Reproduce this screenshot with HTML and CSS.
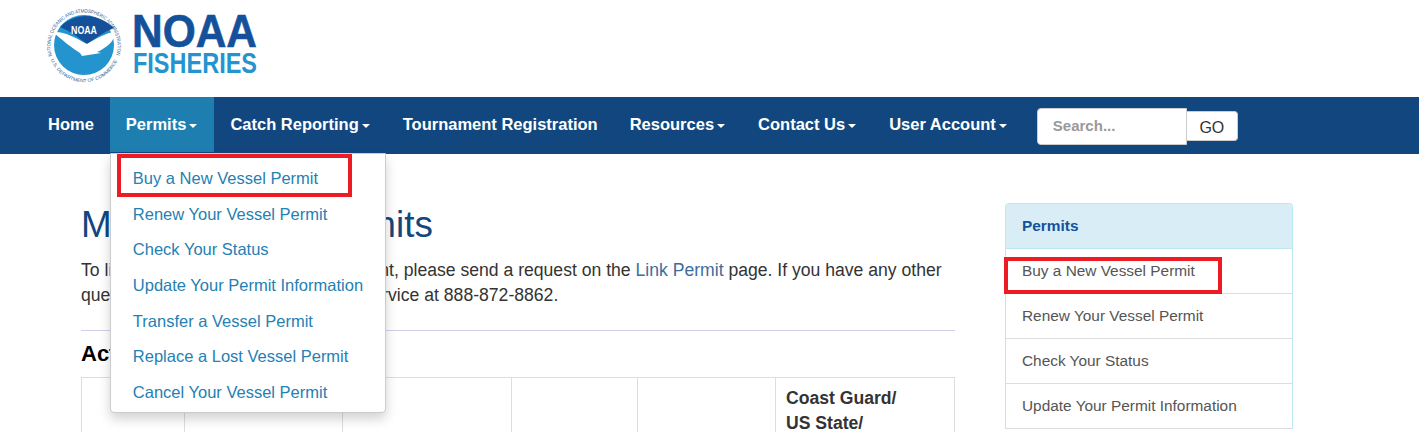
FILE: index.html
```html
<!DOCTYPE html>
<html lang="en">
<head>
<meta charset="utf-8">
<title>Permits</title>
<link rel="stylesheet" href="styles.css">
</head>
<body>
<header class="brand">
  <svg class="logo" width="240" height="97" viewBox="0 0 240 97" aria-label="NOAA Fisheries">
    <defs>
      <path id="ringTop" d="M22 56 A33.5 33.5 0 1 1 86 56"/>
      <path id="ringBot" d="M20 58 A36 36 0 0 0 88 58"/>
    </defs>
    <circle cx="54" cy="45" r="30" fill="#2494cf"/>
    <path d="M30 27 C37 20 46 16 56 16 C67 16 77 21 84 28 C74 32 66 38 57 44 C49 38 40 31 30 27Z" fill="#15519b"/>
    <path d="M23 32 C34 31 46 38 57 44 C67 38 76 33 87 31 C84 42 76 48 67 52 L71 53 L52 56 L50 53 C42 48 32 40 23 32Z" fill="#fff"/>
    <text x="41" y="34" class="logo-mini" textLength="26" lengthAdjust="spacingAndGlyphs">NOAA</text>
    <text class="logo-ring"><textPath href="#ringTop" textLength="124" lengthAdjust="spacingAndGlyphs">NATIONAL OCEANIC AND ATMOSPHERIC ADMINISTRATION</textPath></text>
    <text class="logo-ring small"><textPath href="#ringBot" startOffset="2" textLength="84" lengthAdjust="spacingAndGlyphs">U.S. DEPARTMENT OF COMMERCE</textPath></text>
    <text x="102" y="47" class="logo-noaa" textLength="125" lengthAdjust="spacingAndGlyphs">NOAA</text>
    <text x="103" y="73" class="logo-fish" textLength="124" lengthAdjust="spacingAndGlyphs">FISHERIES</text>
  </svg>
</header>

<nav class="navbar">
  <ul class="nav-list">
    <li class="nav-item"><a href="#">Home</a></li>
    <li class="nav-item active"><a href="#">Permits<span class="caret"></span></a>
      <ul class="dropdown">
        <li><a href="#">Buy a New Vessel Permit</a></li>
        <li><a href="#">Renew Your Vessel Permit</a></li>
        <li><a href="#">Check Your Status</a></li>
        <li><a href="#">Update Your Permit Information</a></li>
        <li><a href="#">Transfer a Vessel Permit</a></li>
        <li><a href="#">Replace a Lost Vessel Permit</a></li>
        <li><a href="#">Cancel Your Vessel Permit</a></li>
      </ul>
      <span class="red-box red-menu"></span>
    </li>
    <li class="nav-item"><a href="#">Catch Reporting<span class="caret"></span></a></li>
    <li class="nav-item"><a href="#">Tournament Registration</a></li>
    <li class="nav-item"><a href="#">Resources<span class="caret"></span></a></li>
    <li class="nav-item"><a href="#">Contact Us<span class="caret"></span></a></li>
    <li class="nav-item"><a href="#">User Account<span class="caret"></span></a></li>
  </ul>
  <form class="search">
    <input class="search-input" type="text" placeholder="Search...">
    <button class="search-btn" type="button">GO</button>
  </form>
</nav>

<div class="page">
  <main class="content">
    <h1>Manage Your Permits</h1>
    <p class="intro">To link a vessel permit to a user account, please send a request on the <a href="#">Link Permit</a> page. If you have any other questions please contact Customer Service at 888-872-8862.</p>
    <hr>
    <h2>Active Permits</h2>
    <table class="permits">
      <tr>
        <th class="c1">Permit</th>
        <th class="c2">Vessel</th>
        <th class="c3">Owner</th>
        <th class="c4">Issued</th>
        <th class="c5">Expires</th>
        <th class="c6">Coast Guard/<br>US State/<br>Number</th>
      </tr>
    </table>
  </main>
  <aside class="side">
    <div class="side-head">Permits</div>
    <a class="side-item" href="#">Buy a New Vessel Permit<span class="red-box red-side"></span></a>
    <a class="side-item" href="#">Renew Your Vessel Permit</a>
    <a class="side-item" href="#">Check Your Status</a>
    <a class="side-item" href="#">Update Your Permit Information</a>
  </aside>
</div>
</body>
</html>
```
FILE: styles.css
```css
* { box-sizing: border-box; }
html, body { margin: 0; height: 432px; overflow: hidden; background: #fff; }
body { font-family: "Liberation Sans", Arial, sans-serif; color: #333; font-size: 17.6px; }
a { text-decoration: none; }
ul { list-style: none; margin: 0; padding: 0; }

.brand { height: 97px; padding-left: 30px; }
.logo { display: block; }
.logo-mini { font: bold 10px "Liberation Sans", sans-serif; fill: #fff; }
.logo-ring { font: 5px "Liberation Sans", sans-serif; fill: #2b5e94; }
.logo-ring.small { font-size: 4.6px; }
.logo-noaa { font: bold 47px "Liberation Sans", sans-serif; fill: #15519b; stroke: #15519b; stroke-width: .6px; }
.logo-fish { font: bold 29px "Liberation Sans", sans-serif; fill: #2494cf; }

.navbar { height: 57px; background: #11477e; display: flex; align-items: flex-start; padding-left: 32px; }
.nav-list { display: flex; }
.nav-item { position: relative; }
.nav-item > a { display: block; height: 55px; padding: 17px 16px 0; font-size: 16.5px; line-height: 20px; font-weight: 700; color: #fff; }
.nav-item.active > a { background: #1f7eb0; }
.caret { display: inline-block; width: 0; height: 0; margin: 0 1px 0 3px; vertical-align: middle; border-top: 4px solid #fff; border-left: 4px solid transparent; border-right: 4px solid transparent; }

.dropdown { position: absolute; z-index: 5; top: 56px; left: 0; width: 276px; height: 260px; padding-top: 7px; background: #fff; border: 1px solid #ccc; border-radius: 0 0 4px 4px; box-shadow: 0 6px 12px rgba(0,0,0,.175); }
.dropdown li a { display: block; height: 35.7px; padding-left: 22px; font-size: 16.5px; line-height: 35.7px; color: #2580b3; white-space: nowrap; }

.red-box { position: absolute; z-index: 6; border: 4px solid #ed1c24; pointer-events: none; }
.red-menu { left: 7px; top: 57px; width: 235px; height: 43px; }

.search { display: flex; align-items: flex-start; margin-left: 13px; padding-top: 11px; }
.search-input { width: 150px; height: 37px; padding: 0 15px 2px; border: 1px solid #ccc; border-radius: 4px 0 0 4px; background: #fff; font: 700 15px "Liberation Sans", sans-serif; color: #555; }
.search-input::placeholder { color: #999; opacity: 1; }
.search-btn { width: 51px; height: 30px; margin-top: 3px; border: 1px solid #ccc; border-left: 0; border-radius: 0 4px 4px 0; background: #fff; font: 16px "Liberation Sans", sans-serif; color: #333; padding: 3px 0 0; }

.page { display: flex; align-items: flex-start; padding-left: 81px; }
.content { width: 874px; }
h1 { margin: 51px 0 0; font-size: 36.8px; line-height: 40px; font-weight: 400; color: #11477e; }
.intro { margin: 13px 0 0; line-height: 25px; }
.intro a { color: #3e6c9e; }
hr { margin: 22px 0 0; border: 0; border-top: 1px solid #d3cfe8; }
h2 { margin: 11px 0 0; font-size: 22px; line-height: 24px; font-weight: 700; color: #000; }
.permits { margin-top: 11px; width: 873px; border-collapse: collapse; table-layout: fixed; }
.permits th { border: 1px solid #ddd; padding: 8px 10px; vertical-align: bottom; text-align: left; font-size: 17.6px; line-height: 25px; color: #333; }
.c1 { width: 103px; } .c2 { width: 158px; } .c3 { width: 169px; } .c4 { width: 126px; } .c5 { width: 138px; } .c6 { width: 179px; }

.side { width: 288px; margin: 49px 0 0 50px; border: 1px solid #bce8f1; border-bottom: 0; border-radius: 4px 4px 0 0; font-size: 15.4px; }
.side-head { height: 45px; padding-left: 16px; line-height: 44px; background: #d9edf7; color: #15519b; font-weight: 700; border-bottom: 1px solid #bce8f1; border-radius: 3px 3px 0 0; }
.side-item { position: relative; display: block; height: 45px; padding: 12px 16px 0; line-height: 20px; color: #555; border-bottom: 1px solid #ddd; }
.red-side { left: -2px; top: 8px; width: 218px; height: 37px; }
```
